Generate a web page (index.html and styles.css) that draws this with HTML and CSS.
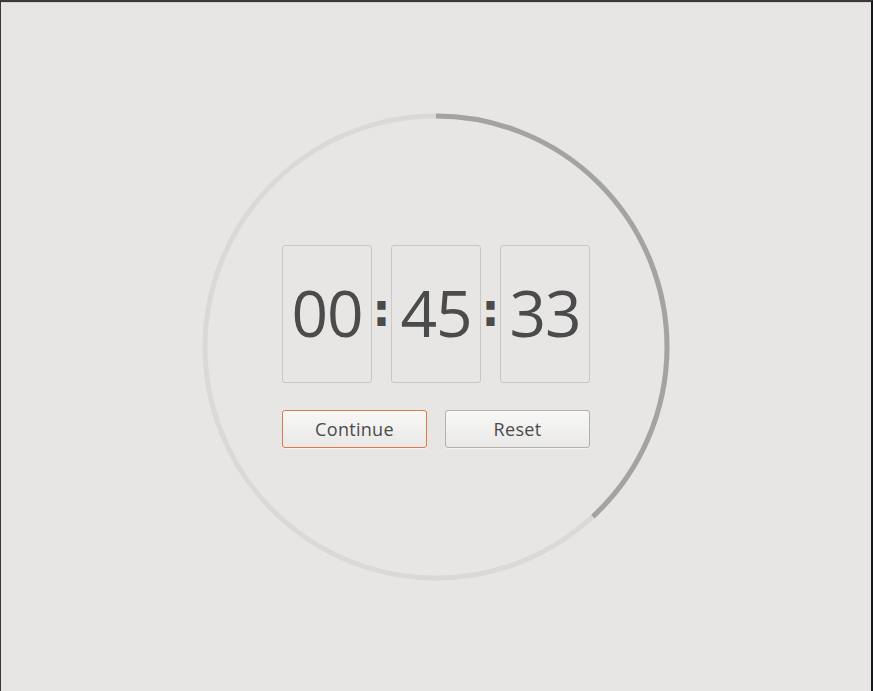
FILE: index.html
```html
<!DOCTYPE html>
<html>
<head>
<meta charset="utf-8">
<link rel="stylesheet" href="styles.css">
</head>
<body>
<div class="window">
  <div class="topline"></div>
  <div class="stage">
    <svg class="ring" width="470" height="470" viewBox="0 0 470 470">
      <circle class="track" cx="235" cy="235" r="231"/>
      <circle class="progress" cx="235" cy="235" r="231" transform="rotate(-90 235 235)"/>
    </svg>
    <div class="timer">
      <div class="digits">
        <div class="box">00</div>
        <div class="sep">:</div>
        <div class="box">45</div>
        <div class="sep">:</div>
        <div class="box">33</div>
      </div>
      <div class="buttons">
        <button class="btn primary">Continue</button>
        <button class="btn">Reset</button>
      </div>
    </div>
  </div>
</div>
</body>
</html>
```
FILE: styles.css
```css
html, body {
  margin: 0;
  padding: 0;
  width: 873px;
  height: 691px;
  overflow: hidden;
  background: #1d2029;
}
.window {
  box-sizing: border-box;
  width: 873px;
  height: 691px;
  border-top: 2px solid #3a3935;
  border-left: 1px solid #3a3935;
  border-right: 2px solid #15171d;
  background: #e8e6e4;
  display: flex;
  flex-direction: column;
}
.topline {
  height: 1px;
  background: #d6d4d1;
}
.stage {
  flex: 1;
  display: grid;
  place-items: center;
  margin-top: -1px;
}
.ring, .timer {
  grid-area: 1 / 1;
}
.ring circle {
  fill: none;
  stroke-width: 5;
}
.track {
  stroke: #dad9d7;
}
.progress {
  stroke: #a3a3a2;
  stroke-dasharray: 553 1452;
}
.timer {
  display: flex;
  flex-direction: column;
  align-items: center;
  gap: 27px;
  margin-top: -1px;
}
.digits {
  display: flex;
  align-items: center;
}
.box {
  box-sizing: border-box;
  width: 90px;
  height: 138px;
  border: 1px solid #cac8c5;
  border-radius: 3px;
  display: flex;
  align-items: center;
  justify-content: center;
  font-family: "Open Sans", "DejaVu Sans", sans-serif;
  font-size: 64px;
  color: #4b4b4b;
  letter-spacing: -1px;
  padding-bottom: 2px;
}
.sep {
  width: 19px;
  text-align: center;
  font-family: "DejaVu Sans", sans-serif;
  font-weight: bold;
  font-size: 46px;
  color: #4b4b4b;
  margin-top: -8px;
}
.buttons {
  display: flex;
  gap: 18px;
}
.btn {
  box-sizing: border-box;
  width: 145px;
  height: 38px;
  border: 1px solid #b3b1ae;
  border-radius: 3px;
  background: linear-gradient(#f8f8f7, #e9e8e6);
  font-family: "Open Sans", "DejaVu Sans", sans-serif;
  font-size: 18px;
  letter-spacing: 0.3px;
  color: #4b4b4b;
  padding: 0;
  box-shadow: 0 1px 0 rgba(255,255,255,0.5);
}
.btn.primary {
  border-color: #e0784a;
}
```
